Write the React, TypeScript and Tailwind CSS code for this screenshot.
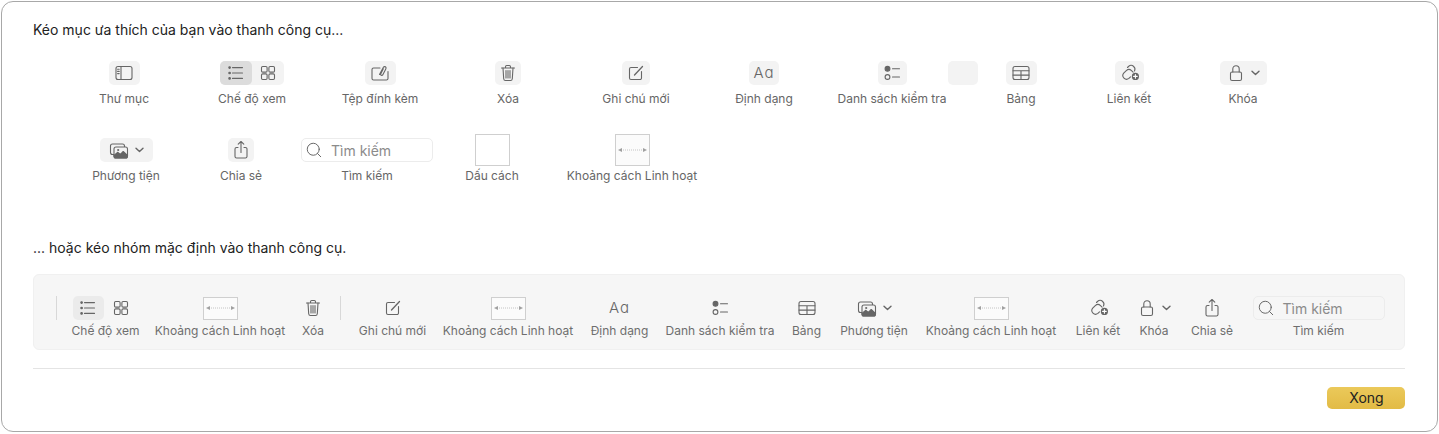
import type { ReactNode } from 'react'
import { Search } from 'lucide-react'

const stroke = { fill: 'none', stroke: 'currentColor', strokeWidth: 1.1, strokeLinecap: 'round', strokeLinejoin: 'round' } as const

function Ico({ w = 20, children }: { w?: number; children: ReactNode }) {
  return (
    <svg width={w} height={20} viewBox={`0 0 ${w} 20`} {...stroke} aria-hidden="true">
      {children}
    </svg>
  )
}

const SidebarIcon = () => (
  <Ico>
    <rect x="2" y="3.5" width="16" height="13" rx="2" />
    <path d="M7 3.5v13M3.6 6.2h1.6M3.6 8.4h1.6M3.6 10.6h1.6" />
  </Ico>
)
const ListIcon = () => (
  <Ico>
    <path d="M6.5 4.6h10M6.5 10h10M6.5 15.4h10" />
    <circle cx="3.6" cy="4.6" r=".8" fill="currentColor" />
    <circle cx="3.6" cy="10" r=".8" fill="currentColor" />
    <circle cx="3.6" cy="15.4" r=".8" fill="currentColor" />
  </Ico>
)
const GridIcon = () => (
  <Ico>
    <rect x="3.5" y="3.5" width="5.6" height="5.6" rx="1.2" />
    <rect x="10.9" y="3.5" width="5.6" height="5.6" rx="1.2" />
    <rect x="3.5" y="10.9" width="5.6" height="5.6" rx="1.2" />
    <rect x="10.9" y="10.9" width="5.6" height="5.6" rx="1.2" />
  </Ico>
)
const AttachIcon = () => (
  <Ico>
    <path d="M10 5H3.6A1.6 1.6 0 0 0 2 6.6v8.8A1.6 1.6 0 0 0 3.6 17h12.8a1.6 1.6 0 0 0 1.6-1.6V8.5" />
    <path d="M9.5 11.5l3.9-7.2c.6-1 2-.9 2.5 0 .3.6.2 1.1-.1 1.6l-3.1 6c-.4.6-1.3.7-1.8.2-.4-.4-.4-.9-.1-1.4l2.5-5" />
  </Ico>
)
const TrashIcon = () => (
  <Ico>
    <path d="M3.5 5h13M7.5 5V3.8c0-.7.5-1.3 1.2-1.3h2.6c.7 0 1.2.6 1.2 1.3V5" />
    <path d="M5 5l.7 10.8c.1.9.7 1.7 1.7 1.7h5.2c1 0 1.6-.8 1.7-1.7L15 5" />
    <path d="M8 7.5v7.5M10 7.5v7.5M12 7.5v7.5" />
  </Ico>
)
const ComposeIcon = () => (
  <Ico>
    <path d="M11.5 4.5H5A1.5 1.5 0 0 0 3.5 6v9A1.5 1.5 0 0 0 5 16.5h9a1.5 1.5 0 0 0 1.5-1.5V8.5" />
    <path d="M8.5 12l8-8.5" strokeWidth="1.3" />
  </Ico>
)
const ChecklistIcon = () => (
  <Ico>
    <circle cx="5.5" cy="5.8" r="2.4" fill="currentColor" />
    <circle cx="5.5" cy="14" r="2.4" />
    <path d="M10.5 5.8h7M10.5 14h7" />
  </Ico>
)
const TableIcon = () => (
  <Ico>
    <rect x="2" y="3.5" width="16" height="13" rx="2" />
    <path d="M2 7.8h16M2 12.1h16M10 7.8v8.7" />
  </Ico>
)
const LinkIcon = () => (
  <Ico w={22}>
    <path d="M12.5 13.8l-1.6 1.6a3.7 3.7 0 0 1-5.2-5.2l2.6-2.6a3.7 3.7 0 0 1 5.2 0l1.6 1.6" />
    <path d="M9.5 4.5l1-1a3.7 3.7 0 0 1 5.2 0 3.7 3.7 0 0 1 .8 4.4" />
    <circle cx="17.4" cy="13.4" r="3.6" fill="currentColor" stroke="none" />
    <path d="M17.4 11.6v3.6M15.6 13.4h3.6" stroke="#fff" />
  </Ico>
)
const LockIcon = () => (
  <Ico>
    <rect x="4.5" y="9" width="11" height="8.5" rx="1.6" />
    <path d="M6.8 9V6a3.2 3.2 0 0 1 6.4 0v3" />
  </Ico>
)
const MediaIcon = () => (
  <Ico>
    <rect x="1.5" y="4" width="14" height="10.5" rx="2" />
    <rect x="5" y="7" width="13.5" height="11" rx="2" fill="#f3f3f3" />
    <path d="M5 15.5l3.6-3.2 2.8 2.2 2.8-3 4.3 4V16a2 2 0 0 1-2 2H7a2 2 0 0 1-2-2z" fill="currentColor" />
    <circle cx="9.2" cy="10" r="1.1" fill="currentColor" stroke="none" />
  </Ico>
)
const ShareIcon = () => (
  <Ico>
    <path d="M7 7.5H5.6A1.6 1.6 0 0 0 4 9.1v7.3A1.6 1.6 0 0 0 5.6 18h8.8a1.6 1.6 0 0 0 1.6-1.6V9.1a1.6 1.6 0 0 0-1.6-1.6H13" />
    <path d="M10 12.5V1.5M7.2 4.2L10 1.5l2.8 2.7" />
  </Ico>
)
const Chevron = () => (
  <svg width="9" height="6" viewBox="0 0 9 6" fill="none" stroke="currentColor" strokeWidth="1.4" strokeLinecap="round" strokeLinejoin="round" aria-hidden="true">
    <path d="M1 1.2l3.5 3.4L8 1.2" />
  </svg>
)
const FormatIcon = () => <span className="text-[15px] font-light leading-5 tracking-[1px]">Aɑ</span>

function Chip({ className, children }: { className: string; children?: ReactNode }) {
  return <div className={`flex h-6 items-center justify-center rounded-[5px] ${className}`}>{children}</div>
}

function Flex({ className }: { className: string }) {
  return (
    <div className={`flex w-[35px] items-center justify-center border border-[#cfcfcf] bg-[#fbfbfb] ${className}`}>
      <svg width="29" height="6" viewBox="0 0 29 6" aria-hidden="true">
        <path d="M3 3h23" stroke="#c4c4c4" strokeDasharray="1 1" />
        <path d="M0 3l4-2v4zM29 3l-4-2v4z" fill="#a0a0a0" />
      </svg>
    </div>
  )
}

function SearchBox() {
  return (
    <div className="flex h-6 w-[132px] items-center gap-2 rounded-[5px] border border-[#ececec] pl-[3px] text-[14px] text-[#8b8b8b]">
      <Search size={18} strokeWidth={1.3} className="text-[#666]" />
      Tìm kiếm
    </div>
  )
}

function Item({ className, label, children }: { className: string; label: string; children: ReactNode }) {
  return (
    <div className={`flex shrink-0 flex-col items-center ${className}`}>
      <div className="flex h-8 items-center justify-center">{children}</div>
      <span className="mt-[2px] whitespace-nowrap text-[12px] leading-4 text-[#666]">{label}</span>
    </div>
  )
}

function BarItem({ className, label, children }: { className: string; label: string; children: ReactNode }) {
  return (
    <div className={`flex shrink-0 flex-col items-center ${className}`}>
      <div className="flex h-6 items-center justify-center">{children}</div>
      <span className="mt-[3px] whitespace-nowrap text-[12px] leading-4 text-[#6e6e6e]">{label}</span>
    </div>
  )
}

export default function App() {
  return (
    <div className="h-[434px] w-[1439px] bg-white p-px font-['Inter',sans-serif]">
      <div className="h-[431px] w-[1437px] rounded-[12px] border border-[#a8a8a8] pl-[31px] pr-[31px] pt-[18px] text-[#666]">
        <p className="text-[14px] leading-5 text-[#222]">Kéo mục ưa thích của bạn vào thanh công cụ...</p>

        <div className="mt-[17px] flex pl-[27px]">
          <Item className="w-[128px]" label="Thư mục">
            <Chip className="w-[31px] bg-[#f3f3f3]"><SidebarIcon /></Chip>
          </Item>
          <Item className="w-[128px]" label="Chế độ xem">
            <div className="flex w-[64px] rounded-[5px] bg-[#f3f3f3]">
              <Chip className="w-[32px] bg-[#dcdcdc]"><ListIcon /></Chip>
              <Chip className="w-[32px]"><GridIcon /></Chip>
            </div>
          </Item>
          <Item className="w-[128px]" label="Tệp đính kèm">
            <Chip className="w-[31px] bg-[#f3f3f3]"><AttachIcon /></Chip>
          </Item>
          <Item className="w-[128px]" label="Xóa">
            <Chip className="w-[26px] bg-[#f3f3f3]"><TrashIcon /></Chip>
          </Item>
          <Item className="w-[128px]" label="Ghi chú mới">
            <Chip className="w-[28px] bg-[#f3f3f3]"><ComposeIcon /></Chip>
          </Item>
          <Item className="w-[128px]" label="Định dạng">
            <Chip className="w-[30px] bg-[#f3f3f3]"><FormatIcon /></Chip>
          </Item>
          <Item className="ml-[9px] w-[110px]" label="Danh sách kiểm tra">
            <Chip className="w-[29px] bg-[#f3f3f3]"><ChecklistIcon /></Chip>
          </Item>
          <div className="ml-px flex h-8 w-[30px] items-center">
            <Chip className="w-[30px] bg-[#f3f3f3]" />
          </div>
          <Item className="w-[86px]" label="Bảng">
            <Chip className="w-[31px] bg-[#f3f3f3]"><TableIcon /></Chip>
          </Item>
          <Item className="w-[130px]" label="Liên kết">
            <Chip className="w-[29px] bg-[#f3f3f3]"><LinkIcon /></Chip>
          </Item>
          <Item className="w-[98px]" label="Khóa">
            <Chip className="w-[47px] gap-[5px] bg-[#f3f3f3]"><LockIcon /><Chevron /></Chip>
          </Item>
        </div>

        <div className="mt-[27px] flex pl-[53px]">
          <Item className="w-[80px]" label="Phương tiện">
            <Chip className="w-[53px] gap-[6px] bg-[#f3f3f3]"><MediaIcon /><Chevron /></Chip>
          </Item>
          <Item className="ml-[35px] w-[80px]" label="Chia sẻ">
            <Chip className="w-[26px] bg-[#f3f3f3]"><ShareIcon /></Chip>
          </Item>
          <Item className="ml-[20px] w-[132px]" label="Tìm kiếm">
            <SearchBox />
          </Item>
          <Item className="ml-[29px] w-[60px]" label="Dấu cách">
            <div className="h-8 w-[35px] border border-[#cfcfcf]" />
          </Item>
          <Item className="ml-[44px] w-[132px]" label="Khoảng cách Linh hoạt">
            <Flex className="h-8" />
          </Item>
        </div>

        <p className="mt-[54px] text-[14px] leading-5 text-[#222]">... hoặc kéo nhóm mặc định vào thanh công cụ.</p>

        <div className="mt-4 flex h-[76px] w-[1372px] rounded-[6px] border border-[#f0f0f0] bg-[#f6f6f6] pl-[22px] pt-[21px]">
          <div className="h-6 w-px bg-[#d8d8d8]" />
          <BarItem className="ml-[14px] w-[69px]" label="Chế độ xem">
            <div className="flex w-[66px]">
              <Chip className="w-[31px] bg-[#ebebeb]"><ListIcon /></Chip>
              <Chip className="w-[35px]"><GridIcon /></Chip>
            </div>
          </BarItem>
          <BarItem className="ml-[15px] w-[130px]" label="Khoảng cách Linh hoạt">
            <Flex className="h-[23px]" />
          </BarItem>
          <BarItem className="ml-[17px] w-[22px]" label="Xóa"><TrashIcon /></BarItem>
          <div className="ml-4 h-6 w-px bg-[#d8d8d8]" />
          <BarItem className="ml-[17px] w-[69px]" label="Ghi chú mới"><ComposeIcon /></BarItem>
          <BarItem className="ml-4 w-[130px]" label="Khoảng cách Linh hoạt">
            <Flex className="h-[23px]" />
          </BarItem>
          <BarItem className="ml-[17px] w-[59px]" label="Định dạng"><FormatIcon /></BarItem>
          <BarItem className="ml-4 w-[110px]" label="Danh sách kiểm tra"><ChecklistIcon /></BarItem>
          <BarItem className="ml-[17px] w-[29px]" label="Bảng"><TableIcon /></BarItem>
          <BarItem className="ml-[18px] w-[70px]" label="Phương tiện">
            <div className="flex items-center gap-[6px]"><MediaIcon /><Chevron /></div>
          </BarItem>
          <BarItem className="ml-[17px] w-[130px]" label="Khoảng cách Linh hoạt">
            <Flex className="h-[23px]" />
          </BarItem>
          <BarItem className="ml-[19px] w-[46px]" label="Liên kết"><LinkIcon /></BarItem>
          <BarItem className="ml-[18px] w-[30px]" label="Khóa">
            <div className="flex items-center gap-[5px]"><LockIcon /><Chevron /></div>
          </BarItem>
          <BarItem className="ml-[22px] w-[42px]" label="Chia sẻ"><ShareIcon /></BarItem>
          <BarItem className="ml-[19px] w-[133px]" label="Tìm kiếm">
            <SearchBox />
          </BarItem>
        </div>

        <div className="mt-[18px] h-px w-[1372px] bg-[#e4e4e4]" />

        <div className="mt-[18px] flex w-[1372px] justify-end">
          <button className="h-[22px] w-[78px] rounded-[5px] bg-gradient-to-b from-[#ebc95a] to-[#e2bb45] pl-px text-[14px] leading-5 text-[#222]">
            Xong
          </button>
        </div>
      </div>
    </div>
  )
}
